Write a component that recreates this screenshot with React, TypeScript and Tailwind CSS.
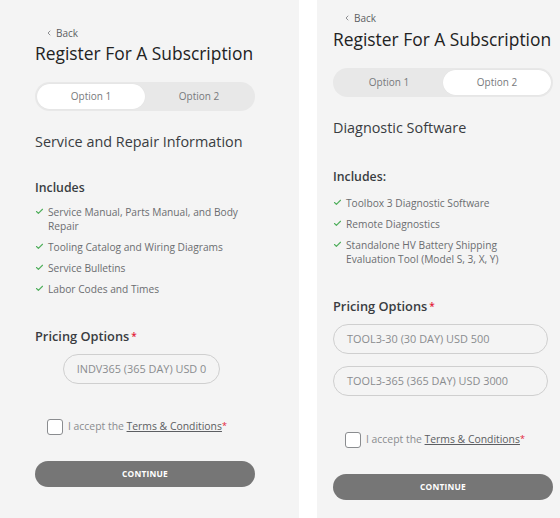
import React from 'react';
import { Check, ChevronLeft } from 'lucide-react';

type ScreenProps = {
  active: 1 | 2;
  heading: string;
  includesLabel: string;
  items: string[];
  prices: string[];
  pad: {
    top: string;
    title: string;
    includes: string;
    list: string;
    pill: string;
    check: string;
  };
  centeredPrice?: boolean;
};

const Screen: React.FC<ScreenProps> = ({ active, heading, includesLabel, items, prices, pad, centeredPrice }) => {
  return (
    <div className={`flex flex-col w-[220px] ${pad.top}`}>
      {/* Back link */}
      <div className="flex items-center gap-[3px] ml-[10px] text-[10px] leading-[12px] font-medium text-[#5c5e62]">
        <ChevronLeft className="w-[8px] h-[8px]" strokeWidth={2} />
        <span>Back</span>
      </div>

      <h1 className={`${pad.title} text-[17.4px] leading-[22px] font-medium text-[#222] whitespace-nowrap`}>
        Register For A Subscription
      </h1>

      {/* Segmented control */}
      <div className="mt-[18px] h-[29px] grid grid-cols-2 p-[2px] rounded-full bg-[#e8e8e8]">
        <div
          className={`flex items-center justify-center rounded-full text-[10px] text-[#77797c] ${
            active === 1 ? 'bg-white shadow-[0_0_1px_rgba(0,0,0,0.08)]' : ''
          }`}
        >
          Option 1
        </div>
        <div
          className={`flex items-center justify-center rounded-full text-[10px] text-[#77797c] ${
            active === 2 ? 'bg-white shadow-[0_0_1px_rgba(0,0,0,0.08)]' : ''
          }`}
        >
          Option 2
        </div>
      </div>

      <h2 className="mt-[21px] text-[14.4px] leading-[20px] font-medium text-[#393c41] whitespace-nowrap">{heading}</h2>

      <h3 className={`${pad.includes} text-[12.3px] leading-[16px] font-semibold text-[#393c41]`}>{includesLabel}</h3>

      <ul className={`${pad.list} flex flex-col gap-[7px]`}>
        {items.map((item) => (
          <li key={item} className="flex items-start gap-[4px] text-[10.2px] leading-[14px] text-[#6b6d70]">
            <Check className="w-[9px] h-[9px] mt-[2px] shrink-0 text-[#4fae5b]" strokeWidth={3} />
            <span className="max-w-[196px]">{item}</span>
          </li>
        ))}
      </ul>

      <div className="mt-[32px] text-[12.8px] leading-[16px] font-semibold text-[#393c41]">
        Pricing Options<span className="text-[#e31937] text-[10px] align-top ml-[2px]">*</span>
      </div>

      <div className={`${pad.pill} flex flex-col gap-[12px]`}>
        {prices.map((p) =>
          centeredPrice ? (
            <div
              key={p}
              className="ml-[28px] w-[157px] h-[30px] flex items-center justify-center rounded-full border border-[#cfcfcf] text-[10.9px] text-[#8a8c8f]"
            >
              {p}
            </div>
          ) : (
            <div
              key={p}
              className="w-[215px] h-[30px] flex items-center pl-[13px] rounded-full border border-[#cfcfcf] text-[10.9px] text-[#8a8c8f]"
            >
              {p}
            </div>
          )
        )}
      </div>

      {/* Terms */}
      <div className={`${pad.check} ml-[12px] flex items-center gap-[5px]`}>
        <div className="w-[16px] h-[16px] rounded-[3px] border border-[#8a8c8f] bg-white" />
        <span className="text-[10.4px] text-[#8a8c8f]">
          I accept the <span className="underline text-[#5c5e62]">Terms &amp; Conditions</span>
          <span className="text-[#e31937] align-top text-[9px]">*</span>
        </span>
      </div>

      <button className="mt-[26px] h-[26px] w-[220px] rounded-full bg-[#767676] text-white text-[8.4px] font-bold tracking-[0.2px]">
        CONTINUE
      </button>
    </div>
  );
};

export default function App() {
  return (
    <div className="w-[560px] h-[518px] flex bg-white overflow-hidden" style={{ fontFamily: '"Open Sans", "Liberation Sans", sans-serif' }}>
      <div className="w-[299px] h-full bg-[#f4f4f4] pl-[35px]">
        <Screen
          active={1}
          heading="Service and Repair Information"
          includesLabel="Includes"
          items={[
            'Service Manual, Parts Manual, and Body Repair',
            'Tooling Catalog and Wiring Diagrams',
            'Service Bulletins',
            'Labor Codes and Times',
          ]}
          prices={['INDV365 (365 DAY) USD 0']}
          centeredPrice
          pad={{
            top: 'pt-[27px]',
            title: 'mt-[3px]',
            includes: 'mt-[28px]',
            list: 'mt-[9px]',
            pill: 'mt-[10px]',
            check: 'mt-[35px]',
          }}
        />
      </div>
      <div className="w-[18px] h-full bg-white" />
      <div className="flex-1 h-full bg-[#f4f4f4] pl-[16px]">
        <Screen
          active={2}
          heading="Diagnostic Software"
          includesLabel="Includes:"
          items={[
            'Toolbox 3 Diagnostic Software',
            'Remote Diagnostics',
            'Standalone HV Battery Shipping Evaluation Tool (Model S, 3, X, Y)',
          ]}
          prices={['TOOL3-30 (30 DAY) USD 500', 'TOOL3-365 (365 DAY) USD 3000']}
          pad={{
            top: 'pt-[12px]',
            title: 'mt-[4px]',
            includes: 'mt-[31px]',
            list: 'mt-[11px]',
            pill: 'mt-[10px]',
            check: 'mt-[36px]',
          }}
        />
      </div>
    </div>
  );
}
